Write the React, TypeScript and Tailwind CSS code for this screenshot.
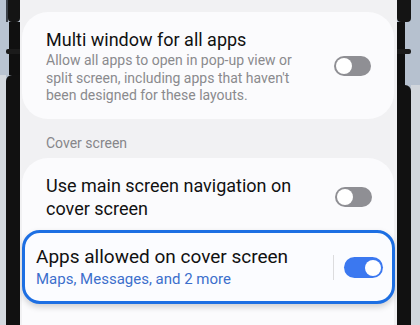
import React from "react";

function ToggleOff() {
  return (
    <div className="w-[37px] h-[20px] rounded-full bg-[#8f8f94] flex items-center pl-[2px] shrink-0">
      <div className="w-[16px] h-[16px] rounded-full bg-white" />
    </div>
  );
}

function ToggleOn() {
  return (
    <div className="w-[39px] h-[21px] rounded-full bg-[#3b78f0] flex items-center justify-end pr-[2.5px] shrink-0">
      <div className="w-[16px] h-[16px] rounded-full bg-white" />
    </div>
  );
}

function LeftFrame() {
  return (
    <div className="w-[20px] h-full flex shrink-0">
      <div className="w-[6px] h-full flex flex-col">
        <div className="h-[75px] bg-[#b9c4d2]" />
        <div className="flex-1 bg-[#d4d9df]" />
      </div>
      <div className="w-[14px] h-full flex flex-col bg-[#b9c4d2]">
        <div className="h-[22px] flex">
          <div className="w-[2px] bg-[#3a3f47]" />
          <div className="flex-1 bg-[#141414] rounded-b-[4px]" />
        </div>
        <div className="h-[27px] flex">
          <div className="w-[3px]" />
          <div className="flex-1 bg-[#101010]" />
        </div>
        <div className="h-[5px] bg-[#1b1b1b] rounded-l-[2px]" />
        <div className="h-[21px] flex">
          <div className="w-[3px]" />
          <div className="flex-1 bg-[#101010]" />
        </div>
        <div className="flex-1 bg-[#111111] rounded-tl-[6px]" />
      </div>
    </div>
  );
}

function RightFrame() {
  return (
    <div className="w-[23px] h-full flex shrink-0 bg-[#b6c1cf]">
      <div className="w-[14px] h-full flex flex-col">
        <div className="h-[22px] bg-[#141414] rounded-b-[4px]" />
        <div className="h-[27px] flex">
          <div className="w-[8px] bg-[#101010]" />
          <div className="flex-1 bg-[#b6c1cf]" />
        </div>
        <div className="h-[5px] bg-[#1b1b1b] rounded-r-[2px]" />
        <div className="h-[31px] flex">
          <div className="w-[8px] bg-[#101010]" />
          <div className="flex-1" />
        </div>
        <div className="flex-1 bg-[#111111] rounded-tr-[6px]" />
      </div>
      <div className="w-[9px] h-full flex flex-col">
        <div className="h-[85px] bg-[#b6c1cf]" />
        <div className="flex-1 bg-[#d1d6dc]" />
      </div>
    </div>
  );
}

export default function App() {
  return (
    <div
      className="w-[420px] h-[325px] flex overflow-hidden bg-black"
      style={{ fontFamily: "Roboto, 'Noto Sans', sans-serif" }}
    >
      <LeftFrame />
      <div className="flex-1 h-full bg-[#f1f1f3] pl-[2px] pr-[3px] pt-[12px] flex flex-col overflow-hidden">
        <div className="bg-[#fbfbfd] rounded-[26px] pl-[24px] pr-[23px] pt-[16px] pb-[14px] flex items-center">
          <div className="flex-1 min-w-0">
            <div className="text-[18px] leading-[24px] text-[#111111]">Multi window for all apps</div>
            <div className="text-[14px] leading-[17.5px] text-[#8a8a8d] pr-[26px]">
              Allow all apps to open in pop-up view or split screen, including apps that haven't been designed for these layouts.
            </div>
          </div>
          <ToggleOff />
        </div>
        <div className="pl-[24px] mt-[15px] mb-[6px] text-[14px] leading-[18px] text-[#86868a]">Cover screen</div>
        <div className="flex-1 bg-[#fbfbfd] rounded-t-[26px] flex flex-col">
          <div className="pl-[24px] pr-[22px] pt-[16.5px] flex items-center">
            <div className="flex-1 text-[18px] leading-[23px] text-[#111111]">
              Use main screen navigation on
              <br />
              cover screen
            </div>
            <ToggleOff />
          </div>
          <div className="mt-[9.5px] mr-[-1px] border-[3px] border-[#1d6fe3] rounded-[18px] bg-[#fbfcff] shadow-[0_3px_6px_rgba(0,0,0,0.18)] pl-[11px] pr-[9px] pt-[12.5px] pb-[11px] flex items-center">
            <div className="flex-1">
              <div className="text-[19px] leading-[24px] text-[#111111]">Apps allowed on cover screen</div>
              <div className="text-[15px] leading-[21px] text-[#3b6fcc]">Maps, Messages, and 2 more</div>
            </div>
            <div className="w-[1.5px] h-[25px] bg-[#dcdcde] mr-[10px]" />
            <ToggleOn />
          </div>
        </div>
      </div>
      <RightFrame />
    </div>
  );
}
